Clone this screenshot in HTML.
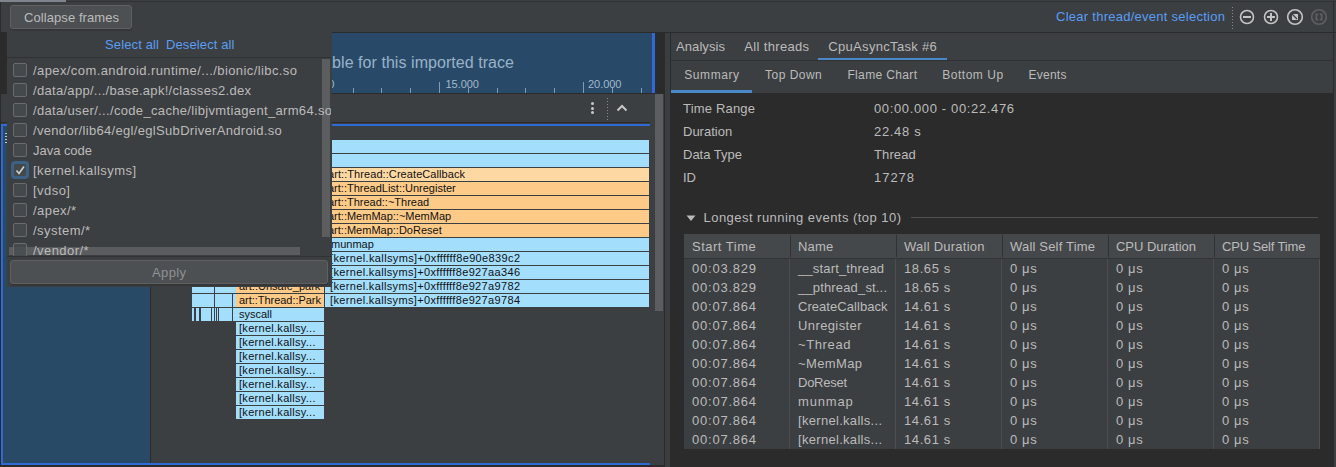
<!DOCTYPE html>
<html><head><meta charset="utf-8">
<style>
html,body{margin:0;padding:0;}
body{width:1336px;height:467px;overflow:hidden;position:relative;background:#3c3f41;font-family:"Liberation Sans",sans-serif;color:#bbbbbb;}
.a{position:absolute;}
.t{position:absolute;white-space:nowrap;line-height:1;}
</style></head><body>
<div class="a" style="left:0px;top:1px;width:1336px;height:1px;background:#313233;"></div>
<div class="a" style="left:0px;top:0px;width:66px;height:2px;background:#7f848d;"></div>
<div class="a" style="left:0px;top:32px;width:1336px;height:1px;background:#2b2b2b;"></div>
<div class="a" style="left:0px;top:2px;width:1px;height:30px;background:#2b2b2b;"></div>
<div class="a" style="left:0px;top:33px;width:7px;height:60px;background:#2b2b2b;"></div>
<div class="a" style="left:7px;top:33px;width:645px;height:60px;background:#284a68;"></div>
<div class="a" style="left:652px;top:33px;width:3px;height:60px;background:#2f69d6;"></div>
<div class="a" style="left:655px;top:33px;width:9px;height:60px;background:#2b2b2b;"></div>
<div class="t" style="right:822px;top:54.5px;font-size:16px;letter-spacing:0.05px;color:#9ab2c9">not available for this imported trace</div>
<div class="a" style="left:36px;top:88px;width:1px;height:5px;background:#7f9cb6;"></div>
<div class="a" style="left:65px;top:88px;width:1px;height:5px;background:#7f9cb6;"></div>
<div class="a" style="left:93px;top:88px;width:1px;height:5px;background:#7f9cb6;"></div>
<div class="a" style="left:122px;top:88px;width:1px;height:5px;background:#7f9cb6;"></div>
<div class="a" style="left:151px;top:82px;width:1px;height:11px;background:#7f9cb6;"></div>
<div class="a" style="left:180px;top:88px;width:1px;height:5px;background:#7f9cb6;"></div>
<div class="a" style="left:209px;top:88px;width:1px;height:5px;background:#7f9cb6;"></div>
<div class="a" style="left:237px;top:88px;width:1px;height:5px;background:#7f9cb6;"></div>
<div class="a" style="left:266px;top:88px;width:1px;height:5px;background:#7f9cb6;"></div>
<div class="a" style="left:295px;top:82px;width:1px;height:11px;background:#7f9cb6;"></div>
<div class="a" style="left:324px;top:88px;width:1px;height:5px;background:#7f9cb6;"></div>
<div class="a" style="left:353px;top:88px;width:1px;height:5px;background:#7f9cb6;"></div>
<div class="a" style="left:381px;top:88px;width:1px;height:5px;background:#7f9cb6;"></div>
<div class="a" style="left:410px;top:88px;width:1px;height:5px;background:#7f9cb6;"></div>
<div class="a" style="left:439px;top:82px;width:1px;height:11px;background:#7f9cb6;"></div>
<div class="a" style="left:468px;top:88px;width:1px;height:5px;background:#7f9cb6;"></div>
<div class="a" style="left:497px;top:88px;width:1px;height:5px;background:#7f9cb6;"></div>
<div class="a" style="left:525px;top:88px;width:1px;height:5px;background:#7f9cb6;"></div>
<div class="a" style="left:554px;top:88px;width:1px;height:5px;background:#7f9cb6;"></div>
<div class="a" style="left:583px;top:82px;width:1px;height:11px;background:#7f9cb6;"></div>
<div class="a" style="left:612px;top:88px;width:1px;height:5px;background:#7f9cb6;"></div>
<div class="a" style="left:641px;top:88px;width:1px;height:5px;background:#7f9cb6;"></div>
<div class="t" style="left:301px;top:78.69px;font-size:11px;color:#a3b9cc;letter-spacing:-0.048px;">10.000</div>
<div class="t" style="left:445.5px;top:78.69px;font-size:11px;color:#a3b9cc;letter-spacing:-0.048px;">15.000</div>
<div class="t" style="left:588px;top:78.69px;font-size:11px;color:#a3b9cc;letter-spacing:-0.048px;">20.000</div>
<div class="a" style="left:0px;top:93px;width:664px;height:1px;background:#2b2b2b;"></div>
<div class="a" style="left:0px;top:94px;width:1px;height:371px;background:#2b2b2b;"></div>
<div class="a" style="left:590.5px;top:102px;width:3px;height:3px;border-radius:50%;background:#c8c8c8"></div>
<div class="a" style="left:590.5px;top:106.5px;width:3px;height:3px;border-radius:50%;background:#c8c8c8"></div>
<div class="a" style="left:590.5px;top:111px;width:3px;height:3px;border-radius:50%;background:#c8c8c8"></div>
<div class="a" style="left:607px;top:98px;width:1px;height:22px;background:repeating-linear-gradient(#8a8a8a 0 1px,transparent 1px 3px);"></div>
<svg class="a" style="left:615px;top:101px" width="14" height="14"><path d="M2.5 9.5 L7 5 L11.5 9.5" stroke="#c8c8c8" stroke-width="2" fill="none"/></svg>
<div class="a" style="left:0px;top:122px;width:650px;height:1px;background:#2b2b2b;"></div>
<div class="a" style="left:655px;top:94px;width:8px;height:217px;background:#5b5d5f;"></div>
<div class="a" style="left:664px;top:33px;width:1px;height:434px;background:#2b2b2b;"></div>
<div class="a" style="left:665px;top:33px;width:5px;height:434px;background:#3b3e40;"></div>
<div class="a" style="left:1px;top:124px;width:649px;height:2px;background:#2f69d6;"></div>
<div class="a" style="left:1px;top:124px;width:2px;height:341px;background:#2f69d6;"></div>
<div class="a" style="left:1px;top:463px;width:649px;height:2px;background:#2f69d6;"></div>
<div class="a" style="left:0px;top:465px;width:664px;height:2px;background:#2b2b2b;"></div>
<div class="a" style="left:3px;top:126px;width:147px;height:337px;background:#284a67;"></div>
<div class="a" style="left:150px;top:126px;width:1px;height:337px;background:#2b2b2b;"></div>
<div class="a" style="left:5px;top:133px;width:2px;height:1px;background:#c0c8d0;"></div>
<div class="a" style="left:5px;top:136px;width:2px;height:1px;background:#c0c8d0;"></div>
<div class="a" style="left:5px;top:139px;width:2px;height:1px;background:#c0c8d0;"></div>
<div class="a" style="left:5px;top:142px;width:2px;height:1px;background:#c0c8d0;"></div>
<div class="a" style="left:192px;top:140px;width:457px;height:13px;background:#a3defd;"></div>
<div class="a" style="left:192px;top:154px;width:457px;height:13px;background:#a3defd;"></div>
<div class="a" style="left:192px;top:168px;width:132px;height:13px;background:#a3defd;"></div>
<div class="a" style="left:192px;top:182px;width:132px;height:13px;background:#a3defd;"></div>
<div class="a" style="left:192px;top:196px;width:132px;height:13px;background:#a3defd;"></div>
<div class="a" style="left:192px;top:210px;width:132px;height:13px;background:#a3defd;"></div>
<div class="a" style="left:192px;top:224px;width:132px;height:13px;background:#a3defd;"></div>
<div class="a" style="left:192px;top:238px;width:132px;height:13px;background:#a3defd;"></div>
<div class="a" style="left:192px;top:252px;width:132px;height:13px;background:#a3defd;"></div>
<div class="a" style="left:192px;top:266px;width:132px;height:13px;background:#a3defd;"></div>
<div class="a" style="left:325px;top:168px;width:324px;height:13px;background:#fed8a3;"></div>
<div class="t" style="left:328px;top:168px;width:321px;overflow:hidden;font-size:11px;line-height:13px;color:#111;letter-spacing:0.073px;">art::Thread::CreateCallback</div>
<div class="a" style="left:325px;top:182px;width:324px;height:13px;background:#fdca87;"></div>
<div class="t" style="left:328px;top:182px;width:321px;overflow:hidden;font-size:11px;line-height:13px;color:#111;">art::ThreadList::Unregister</div>
<div class="a" style="left:325px;top:196px;width:324px;height:13px;background:#fdca87;"></div>
<div class="t" style="left:328px;top:196px;width:321px;overflow:hidden;font-size:11px;line-height:13px;color:#111;">art::Thread::~Thread</div>
<div class="a" style="left:325px;top:210px;width:324px;height:13px;background:#fdca87;"></div>
<div class="t" style="left:328px;top:210px;width:321px;overflow:hidden;font-size:11px;line-height:13px;color:#111;">art::MemMap::~MemMap</div>
<div class="a" style="left:325px;top:224px;width:324px;height:13px;background:#fdca87;"></div>
<div class="t" style="left:328px;top:224px;width:321px;overflow:hidden;font-size:11px;line-height:13px;color:#111;">art::MemMap::DoReset</div>
<div class="a" style="left:325px;top:238px;width:324px;height:13px;background:#a3defd;"></div>
<div class="t" style="left:331px;top:238px;width:318px;overflow:hidden;font-size:11px;line-height:13px;color:#111;">munmap</div>
<div class="a" style="left:325px;top:252px;width:324px;height:13px;background:#a3defd;"></div>
<div class="t" style="left:330px;top:252px;width:319px;overflow:hidden;font-size:11px;line-height:13px;color:#111;letter-spacing:0.365px;">[kernel.kallsyms]+0xffffff8e90e839c2</div>
<div class="a" style="left:325px;top:266px;width:324px;height:13px;background:#a3defd;"></div>
<div class="t" style="left:330px;top:266px;width:319px;overflow:hidden;font-size:11px;line-height:13px;color:#111;letter-spacing:0.347px;">[kernel.kallsyms]+0xffffff8e927aa346</div>
<div class="a" style="left:325px;top:280px;width:324px;height:13px;background:#a3defd;"></div>
<div class="t" style="left:330px;top:280px;width:319px;overflow:hidden;font-size:11px;line-height:13px;color:#111;letter-spacing:0.347px;">[kernel.kallsyms]+0xffffff8e927a9782</div>
<div class="a" style="left:325px;top:294px;width:324px;height:13px;background:#a3defd;"></div>
<div class="t" style="left:330px;top:294px;width:319px;overflow:hidden;font-size:11px;line-height:13px;color:#111;letter-spacing:0.347px;">[kernel.kallsyms]+0xffffff8e927a9784</div>
<div class="a" style="left:192px;top:280px;width:22px;height:13px;background:#a3defd;"></div>
<div class="a" style="left:215px;top:280px;width:21px;height:13px;background:#a3defd;"></div>
<div class="a" style="left:236px;top:280px;width:88px;height:13px;background:#fdca87;"></div>
<div class="t" style="left:239px;top:280px;width:85px;overflow:hidden;font-size:11px;line-height:13px;color:#111;">art::Unsafe_park</div>
<div class="a" style="left:192px;top:294px;width:22px;height:13px;background:#a3defd;"></div>
<div class="a" style="left:215px;top:294px;width:17px;height:13px;background:#a3defd;"></div>
<div class="a" style="left:233px;top:294px;width:3px;height:13px;background:#a3defd;"></div>
<div class="a" style="left:236px;top:294px;width:88px;height:13px;background:#fdca87;"></div>
<div class="t" style="left:239px;top:294px;width:85px;overflow:hidden;font-size:11px;line-height:13px;color:#111;letter-spacing:-0.033px;">art::Thread::Park</div>
<div class="a" style="left:192px;top:308px;width:2px;height:13px;background:#a3defd;"></div>
<div class="a" style="left:196px;top:308px;width:3px;height:13px;background:#a3defd;"></div>
<div class="a" style="left:201px;top:308px;width:10px;height:13px;background:#a3defd;"></div>
<div class="a" style="left:212px;top:308px;width:2px;height:13px;background:#a3defd;"></div>
<div class="a" style="left:215px;top:308px;width:1px;height:13px;background:#a3defd;"></div>
<div class="a" style="left:217px;top:308px;width:1px;height:13px;background:#a3defd;"></div>
<div class="a" style="left:219px;top:308px;width:13px;height:13px;background:#a3defd;"></div>
<div class="a" style="left:233px;top:308px;width:91px;height:13px;background:#a3defd;"></div>
<div class="t" style="left:239px;top:308px;width:85px;overflow:hidden;font-size:11px;line-height:13px;color:#111;">syscall</div>
<div class="a" style="left:236px;top:322px;width:88px;height:13px;background:#a3defd;"></div>
<div class="t" style="left:239px;top:322px;width:85px;overflow:hidden;font-size:11px;line-height:13px;color:#111;letter-spacing:0.286px;">[kernel.kallsy...</div>
<div class="a" style="left:236px;top:336px;width:88px;height:13px;background:#a3defd;"></div>
<div class="t" style="left:239px;top:336px;width:85px;overflow:hidden;font-size:11px;line-height:13px;color:#111;letter-spacing:0.286px;">[kernel.kallsy...</div>
<div class="a" style="left:236px;top:350px;width:88px;height:13px;background:#a3defd;"></div>
<div class="t" style="left:239px;top:350px;width:85px;overflow:hidden;font-size:11px;line-height:13px;color:#111;letter-spacing:0.286px;">[kernel.kallsy...</div>
<div class="a" style="left:236px;top:364px;width:88px;height:13px;background:#a3defd;"></div>
<div class="t" style="left:239px;top:364px;width:85px;overflow:hidden;font-size:11px;line-height:13px;color:#111;letter-spacing:0.286px;">[kernel.kallsy...</div>
<div class="a" style="left:236px;top:378px;width:88px;height:13px;background:#a3defd;"></div>
<div class="t" style="left:239px;top:378px;width:85px;overflow:hidden;font-size:11px;line-height:13px;color:#111;letter-spacing:0.286px;">[kernel.kallsy...</div>
<div class="a" style="left:236px;top:392px;width:88px;height:13px;background:#a3defd;"></div>
<div class="t" style="left:239px;top:392px;width:85px;overflow:hidden;font-size:11px;line-height:13px;color:#111;letter-spacing:0.286px;">[kernel.kallsy...</div>
<div class="a" style="left:236px;top:406px;width:88px;height:13px;background:#a3defd;"></div>
<div class="t" style="left:239px;top:406px;width:85px;overflow:hidden;font-size:11px;line-height:13px;color:#111;letter-spacing:0.286px;">[kernel.kallsy...</div>
<div class="a" style="left:7px;top:2px;width:325px;height:285px;background:#3c3f41;"></div>
<div class="a" style="left:11px;top:27px;width:121px;height:4px;background:#343638;border-radius:0 0 3px 3px"></div>
<div class="a" style="left:10px;top:5px;width:122px;height:24px;background:#4c5052;border:1px solid #5e6060;box-sizing:border-box;border-radius:3px"></div>
<div class="t" style="left:24px;top:11.00px;font-size:13px;color:#bbbbbb;letter-spacing:0.077px;">Collapse frames</div>
<div class="t" style="left:105px;top:37.50px;font-size:13px;color:#589df6;letter-spacing:0.139px;">Select all</div>
<div class="t" style="left:166px;top:37.50px;font-size:13px;color:#589df6;letter-spacing:0.119px;">Deselect all</div>
<div class="a" style="left:7px;top:57px;width:324px;height:1px;background:#2f3133;"></div>
<div class="a" style="left:9px;top:247px;width:291px;height:8px;background:#5a5c5e;"></div>
<div class="a" style="left:322px;top:59px;width:8px;height:178px;background:#5b5d5f;"></div>
<div class="a" style="left:7px;top:58px;width:324px;height:198px;overflow:hidden">
<div class="a" style="left:6px;top:5px;width:14px;height:14px;border-radius:2px;background:rgba(70,76,78,0.8);border:1px solid #6b6b6b;box-sizing:border-box"></div>
<div class="t" style="left:26px;top:6.00px;font-size:13px;letter-spacing:0.409px;color:#bbbbbb">/apex/com.android.runtime/.../bionic/libc.so</div>
<div class="a" style="left:6px;top:25px;width:14px;height:14px;border-radius:2px;background:rgba(70,76,78,0.8);border:1px solid #6b6b6b;box-sizing:border-box"></div>
<div class="t" style="left:26px;top:26.00px;font-size:13px;letter-spacing:0.303px;color:#bbbbbb">/data/app/.../base.apk!/classes2.dex</div>
<div class="a" style="left:6px;top:45px;width:14px;height:14px;border-radius:2px;background:rgba(70,76,78,0.8);border:1px solid #6b6b6b;box-sizing:border-box"></div>
<div class="t" style="left:26px;top:46.00px;font-size:13px;letter-spacing:0.335px;color:#bbbbbb">/data/user/.../code_cache/libjvmtiagent_arm64.so</div>
<div class="a" style="left:6px;top:65px;width:14px;height:14px;border-radius:2px;background:rgba(70,76,78,0.8);border:1px solid #6b6b6b;box-sizing:border-box"></div>
<div class="t" style="left:26px;top:66.00px;font-size:13px;letter-spacing:0.319px;color:#bbbbbb">/vendor/lib64/egl/eglSubDriverAndroid.so</div>
<div class="a" style="left:6px;top:85px;width:14px;height:14px;border-radius:2px;background:rgba(70,76,78,0.8);border:1px solid #6b6b6b;box-sizing:border-box"></div>
<div class="t" style="left:26px;top:86.00px;font-size:13px;letter-spacing:-0.033px;color:#bbbbbb">Java code</div>
<div class="a" style="left:4px;top:103px;width:18px;height:18px;border-radius:4px;background:#3d6185"></div>
<div class="a" style="left:7px;top:106px;width:12px;height:12px;border-radius:2px;background:#43494a"></div>
<svg class="a" style="left:7px;top:106px" width="12" height="12"><path d="M2.5 6.5 L5 9.5 L10 2.5" stroke="#d0d0d0" stroke-width="1.6" fill="none"/></svg>
<div class="t" style="left:26px;top:106.00px;font-size:13px;letter-spacing:0.433px;color:#bbbbbb">[kernel.kallsyms]</div>
<div class="a" style="left:6px;top:125px;width:14px;height:14px;border-radius:2px;background:rgba(70,76,78,0.8);border:1px solid #6b6b6b;box-sizing:border-box"></div>
<div class="t" style="left:26px;top:126.00px;font-size:13px;letter-spacing:0.450px;color:#bbbbbb">[vdso]</div>
<div class="a" style="left:6px;top:145px;width:14px;height:14px;border-radius:2px;background:rgba(70,76,78,0.8);border:1px solid #6b6b6b;box-sizing:border-box"></div>
<div class="t" style="left:26px;top:146.00px;font-size:13px;letter-spacing:0.450px;color:#bbbbbb">/apex/*</div>
<div class="a" style="left:6px;top:165px;width:14px;height:14px;border-radius:2px;background:rgba(70,76,78,0.8);border:1px solid #6b6b6b;box-sizing:border-box"></div>
<div class="t" style="left:26px;top:166.00px;font-size:13px;letter-spacing:0.450px;color:#bbbbbb">/system/*</div>
<div class="a" style="left:6px;top:185px;width:14px;height:14px;border-radius:2px;background:rgba(70,76,78,0.8);border:1px solid #6b6b6b;box-sizing:border-box"></div>
<div class="t" style="left:26px;top:186.00px;font-size:13px;letter-spacing:0.450px;color:#bbbbbb">/vendor/*</div>
</div>
<div class="a" style="left:7px;top:256px;width:324px;height:1px;background:#2f3133;"></div>
<div class="a" style="left:11px;top:282px;width:317px;height:4px;background:#343638;border-radius:0 0 3px 3px"></div>
<div class="a" style="left:10px;top:260px;width:318px;height:24px;background:#4c5052;border:1px solid #5e6060;box-sizing:border-box;border-radius:3px"></div>
<div class="t" style="left:152px;top:266.00px;font-size:13px;color:#909294;letter-spacing:0.371px;">Apply</div>
<div class="a" style="left:670px;top:33px;width:1px;height:434px;background:#2b2b2b;"></div>
<div class="t" style="left:1056px;top:9.60px;font-size:13px;color:#589df6;letter-spacing:0.264px;">Clear thread/event selection</div>
<div class="a" style="left:1232px;top:7px;width:1px;height:22px;background:repeating-linear-gradient(#8a8a8a 0 1px,transparent 1px 3px);"></div>
<svg class="a" style="left:1236px;top:6px" width="100" height="24"><circle cx="11" cy="11" r="6.5" stroke="#c4c4c4" stroke-width="1.6" fill="none"/><rect x="7" y="10" width="8" height="2" fill="#c4c4c4"/><circle cx="35" cy="11" r="6.5" stroke="#c4c4c4" stroke-width="1.6" fill="none"/><rect x="31" y="10" width="8" height="2" fill="#c4c4c4"/><rect x="34" y="7" width="2" height="8" fill="#c4c4c4"/><circle cx="59" cy="11" r="7.3" stroke="#c4c4c4" stroke-width="1.6" fill="none"/><path d="M56 8 H62 V14 H56 Z" fill="#c4c4c4"/><path d="M56 8 L61 13" stroke="#3c3f41" stroke-width="1.3"/><circle cx="83" cy="11" r="7.3" stroke="#5d5f61" stroke-width="1.6" fill="none"/><path d="M82.2 8.3 H80.3 V13.7 H82.2 M83.8 8.3 H85.7 V13.7 H83.8" stroke="#5d5f61" stroke-width="1.7" stroke-linejoin="miter" stroke-linecap="butt" fill="none"/></svg>
<div class="a" style="left:1333px;top:2px;width:1px;height:465px;background:#2b2b2b;"></div>
<div class="t" style="left:676px;top:39.70px;font-size:13px;color:#bbbbbb;letter-spacing:0.085px;">Analysis</div>
<div class="t" style="left:744.3px;top:39.70px;font-size:13px;color:#bbbbbb;letter-spacing:0.338px;">All threads</div>
<div class="t" style="left:828.3px;top:39.70px;font-size:13px;color:#bbbbbb;letter-spacing:0.318px;">CpuAsyncTask #6</div>
<div class="a" style="left:818px;top:58px;width:129px;height:2px;background:#4a88c7;"></div>
<div class="a" style="left:671px;top:60px;width:662px;height:1px;background:#2f3133;"></div>
<div class="t" style="left:684.3px;top:68.84px;font-size:12px;color:#bbbbbb;letter-spacing:0.560px;">Summary</div>
<div class="t" style="left:765.1px;top:68.84px;font-size:12px;color:#bbbbbb;letter-spacing:0.463px;">Top Down</div>
<div class="t" style="left:847.4px;top:68.84px;font-size:12px;color:#bbbbbb;letter-spacing:0.358px;">Flame Chart</div>
<div class="t" style="left:942.2px;top:68.84px;font-size:12px;color:#bbbbbb;letter-spacing:0.526px;">Bottom Up</div>
<div class="t" style="left:1028.5px;top:68.84px;font-size:12px;color:#bbbbbb;letter-spacing:0.243px;">Events</div>
<div class="a" style="left:671px;top:90px;width:81px;height:3px;background:#4a88c7;"></div>
<div class="a" style="left:671px;top:93px;width:662px;height:374px;background:#2b2b2b;"></div>
<div class="t" style="left:683px;top:102.30px;font-size:13px;color:#bbbbbb;letter-spacing:0.186px;">Time Range</div>
<div class="t" style="left:874px;top:102.30px;font-size:13px;color:#bbbbbb;letter-spacing:0.639px;">00:00.000 - 00:22.476</div>
<div class="t" style="left:683px;top:125.30px;font-size:13px;color:#bbbbbb;">Duration</div>
<div class="t" style="left:874px;top:125.30px;font-size:13px;color:#bbbbbb;letter-spacing:0.684px;">22.48 s</div>
<div class="t" style="left:683px;top:148.30px;font-size:13px;color:#bbbbbb;">Data Type</div>
<div class="t" style="left:874px;top:148.30px;font-size:13px;color:#bbbbbb;letter-spacing:0.112px;">Thread</div>
<div class="t" style="left:683px;top:171.30px;font-size:13px;color:#bbbbbb;">ID</div>
<div class="t" style="left:874px;top:171.30px;font-size:13px;color:#bbbbbb;letter-spacing:0.963px;">17278</div>
<svg class="a" style="left:686px;top:214.5px" width="10" height="7"><path d="M0.5 0.5 H9.5 L5 6 Z" fill="#bbbbbb"/></svg>
<div class="t" style="left:703.5px;top:210.50px;font-size:13px;color:#bbbbbb;letter-spacing:0.464px;">Longest running events (top 10)</div>
<div class="a" style="left:911px;top:217px;width:407px;height:1px;background:#4e5254;"></div>
<div class="a" style="left:684px;top:234px;width:636px;height:24px;background:#45484a;"></div>
<div class="a" style="left:684px;top:258px;width:636px;height:1px;background:#323436;"></div>
<div class="a" style="left:684px;top:259px;width:636px;height:190px;background:#3c3f41;"></div>
<div class="a" style="left:1319px;top:259px;width:1px;height:190px;background:#4e5254;"></div>
<div class="t" style="left:692px;top:240.00px;font-size:13px;color:#bbbbbb;letter-spacing:0.501px;">Start Time</div>
<div class="t" style="left:798px;top:240.00px;font-size:13px;color:#bbbbbb;letter-spacing:0.191px;">Name</div>
<div class="t" style="left:904px;top:240.00px;font-size:13px;color:#bbbbbb;letter-spacing:0.247px;">Wall Duration</div>
<div class="t" style="left:1010px;top:240.00px;font-size:13px;color:#bbbbbb;letter-spacing:0.186px;">Wall Self Time</div>
<div class="t" style="left:1116px;top:240.00px;font-size:13px;color:#bbbbbb;letter-spacing:-0.018px;">CPU Duration</div>
<div class="t" style="left:1222px;top:240.00px;font-size:13px;color:#bbbbbb;letter-spacing:-0.145px;">CPU Self Time</div>
<div class="a" style="left:790px;top:235px;width:1px;height:22px;background:#2f3133;"></div>
<div class="a" style="left:789px;top:259px;width:1px;height:190px;background:#4b4e50;"></div>
<div class="a" style="left:896px;top:235px;width:1px;height:22px;background:#2f3133;"></div>
<div class="a" style="left:895px;top:259px;width:1px;height:190px;background:#4b4e50;"></div>
<div class="a" style="left:1002px;top:235px;width:1px;height:22px;background:#2f3133;"></div>
<div class="a" style="left:1001px;top:259px;width:1px;height:190px;background:#4b4e50;"></div>
<div class="a" style="left:1108px;top:235px;width:1px;height:22px;background:#2f3133;"></div>
<div class="a" style="left:1107px;top:259px;width:1px;height:190px;background:#4b4e50;"></div>
<div class="a" style="left:1214px;top:235px;width:1px;height:22px;background:#2f3133;"></div>
<div class="a" style="left:1213px;top:259px;width:1px;height:190px;background:#4b4e50;"></div>
<div class="t" style="left:692px;top:262.00px;font-size:13px;color:#bbbbbb;letter-spacing:0.771px;">00:03.829</div>
<div class="t" style="left:798px;top:262.00px;font-size:13px;color:#bbbbbb;letter-spacing:0.167px;">__start_thread</div>
<div class="t" style="left:904px;top:262.00px;font-size:13px;color:#bbbbbb;letter-spacing:0.601px;">18.65 s</div>
<div class="t" style="left:1010px;top:262.00px;font-size:13px;color:#bbbbbb;letter-spacing:0.639px;">0 μs</div>
<div class="t" style="left:1116px;top:262.00px;font-size:13px;color:#bbbbbb;letter-spacing:0.639px;">0 μs</div>
<div class="t" style="left:1222px;top:262.00px;font-size:13px;color:#bbbbbb;letter-spacing:0.639px;">0 μs</div>
<div class="t" style="left:692px;top:281.00px;font-size:13px;color:#bbbbbb;letter-spacing:0.771px;">00:03.829</div>
<div class="t" style="left:798px;top:281.00px;font-size:13px;color:#bbbbbb;letter-spacing:0.162px;">__pthread_st...</div>
<div class="t" style="left:904px;top:281.00px;font-size:13px;color:#bbbbbb;letter-spacing:0.601px;">18.65 s</div>
<div class="t" style="left:1010px;top:281.00px;font-size:13px;color:#bbbbbb;letter-spacing:0.639px;">0 μs</div>
<div class="t" style="left:1116px;top:281.00px;font-size:13px;color:#bbbbbb;letter-spacing:0.639px;">0 μs</div>
<div class="t" style="left:1222px;top:281.00px;font-size:13px;color:#bbbbbb;letter-spacing:0.639px;">0 μs</div>
<div class="t" style="left:692px;top:300.00px;font-size:13px;color:#bbbbbb;letter-spacing:0.771px;">00:07.864</div>
<div class="t" style="left:798px;top:300.00px;font-size:13px;color:#bbbbbb;letter-spacing:0.048px;">CreateCallback</div>
<div class="t" style="left:904px;top:300.00px;font-size:13px;color:#bbbbbb;letter-spacing:0.601px;">14.61 s</div>
<div class="t" style="left:1010px;top:300.00px;font-size:13px;color:#bbbbbb;letter-spacing:0.639px;">0 μs</div>
<div class="t" style="left:1116px;top:300.00px;font-size:13px;color:#bbbbbb;letter-spacing:0.639px;">0 μs</div>
<div class="t" style="left:1222px;top:300.00px;font-size:13px;color:#bbbbbb;letter-spacing:0.639px;">0 μs</div>
<div class="t" style="left:692px;top:319.00px;font-size:13px;color:#bbbbbb;letter-spacing:0.771px;">00:07.864</div>
<div class="t" style="left:798px;top:319.00px;font-size:13px;color:#bbbbbb;letter-spacing:0.393px;">Unregister</div>
<div class="t" style="left:904px;top:319.00px;font-size:13px;color:#bbbbbb;letter-spacing:0.601px;">14.61 s</div>
<div class="t" style="left:1010px;top:319.00px;font-size:13px;color:#bbbbbb;letter-spacing:0.639px;">0 μs</div>
<div class="t" style="left:1116px;top:319.00px;font-size:13px;color:#bbbbbb;letter-spacing:0.639px;">0 μs</div>
<div class="t" style="left:1222px;top:319.00px;font-size:13px;color:#bbbbbb;letter-spacing:0.639px;">0 μs</div>
<div class="t" style="left:692px;top:338.00px;font-size:13px;color:#bbbbbb;letter-spacing:0.771px;">00:07.864</div>
<div class="t" style="left:798px;top:338.00px;font-size:13px;color:#bbbbbb;letter-spacing:0.620px;">~Thread</div>
<div class="t" style="left:904px;top:338.00px;font-size:13px;color:#bbbbbb;letter-spacing:0.601px;">14.61 s</div>
<div class="t" style="left:1010px;top:338.00px;font-size:13px;color:#bbbbbb;letter-spacing:0.639px;">0 μs</div>
<div class="t" style="left:1116px;top:338.00px;font-size:13px;color:#bbbbbb;letter-spacing:0.639px;">0 μs</div>
<div class="t" style="left:1222px;top:338.00px;font-size:13px;color:#bbbbbb;letter-spacing:0.639px;">0 μs</div>
<div class="t" style="left:692px;top:357.00px;font-size:13px;color:#bbbbbb;letter-spacing:0.771px;">00:07.864</div>
<div class="t" style="left:798px;top:357.00px;font-size:13px;color:#bbbbbb;letter-spacing:0.372px;">~MemMap</div>
<div class="t" style="left:904px;top:357.00px;font-size:13px;color:#bbbbbb;letter-spacing:0.601px;">14.61 s</div>
<div class="t" style="left:1010px;top:357.00px;font-size:13px;color:#bbbbbb;letter-spacing:0.639px;">0 μs</div>
<div class="t" style="left:1116px;top:357.00px;font-size:13px;color:#bbbbbb;letter-spacing:0.639px;">0 μs</div>
<div class="t" style="left:1222px;top:357.00px;font-size:13px;color:#bbbbbb;letter-spacing:0.639px;">0 μs</div>
<div class="t" style="left:692px;top:376.00px;font-size:13px;color:#bbbbbb;letter-spacing:0.771px;">00:07.864</div>
<div class="t" style="left:798px;top:376.00px;font-size:13px;color:#bbbbbb;letter-spacing:-0.263px;">DoReset</div>
<div class="t" style="left:904px;top:376.00px;font-size:13px;color:#bbbbbb;letter-spacing:0.601px;">14.61 s</div>
<div class="t" style="left:1010px;top:376.00px;font-size:13px;color:#bbbbbb;letter-spacing:0.639px;">0 μs</div>
<div class="t" style="left:1116px;top:376.00px;font-size:13px;color:#bbbbbb;letter-spacing:0.639px;">0 μs</div>
<div class="t" style="left:1222px;top:376.00px;font-size:13px;color:#bbbbbb;letter-spacing:0.639px;">0 μs</div>
<div class="t" style="left:692px;top:395.00px;font-size:13px;color:#bbbbbb;letter-spacing:0.771px;">00:07.864</div>
<div class="t" style="left:798px;top:395.00px;font-size:13px;color:#bbbbbb;letter-spacing:0.834px;">munmap</div>
<div class="t" style="left:904px;top:395.00px;font-size:13px;color:#bbbbbb;letter-spacing:0.601px;">14.61 s</div>
<div class="t" style="left:1010px;top:395.00px;font-size:13px;color:#bbbbbb;letter-spacing:0.639px;">0 μs</div>
<div class="t" style="left:1116px;top:395.00px;font-size:13px;color:#bbbbbb;letter-spacing:0.639px;">0 μs</div>
<div class="t" style="left:1222px;top:395.00px;font-size:13px;color:#bbbbbb;letter-spacing:0.639px;">0 μs</div>
<div class="t" style="left:692px;top:414.00px;font-size:13px;color:#bbbbbb;letter-spacing:0.771px;">00:07.864</div>
<div class="t" style="left:798px;top:414.00px;font-size:13px;color:#bbbbbb;letter-spacing:0.302px;">[kernel.kalls...</div>
<div class="t" style="left:904px;top:414.00px;font-size:13px;color:#bbbbbb;letter-spacing:0.601px;">14.61 s</div>
<div class="t" style="left:1010px;top:414.00px;font-size:13px;color:#bbbbbb;letter-spacing:0.639px;">0 μs</div>
<div class="t" style="left:1116px;top:414.00px;font-size:13px;color:#bbbbbb;letter-spacing:0.639px;">0 μs</div>
<div class="t" style="left:1222px;top:414.00px;font-size:13px;color:#bbbbbb;letter-spacing:0.639px;">0 μs</div>
<div class="t" style="left:692px;top:433.00px;font-size:13px;color:#bbbbbb;letter-spacing:0.771px;">00:07.864</div>
<div class="t" style="left:798px;top:433.00px;font-size:13px;color:#bbbbbb;letter-spacing:0.302px;">[kernel.kalls...</div>
<div class="t" style="left:904px;top:433.00px;font-size:13px;color:#bbbbbb;letter-spacing:0.601px;">14.61 s</div>
<div class="t" style="left:1010px;top:433.00px;font-size:13px;color:#bbbbbb;letter-spacing:0.639px;">0 μs</div>
<div class="t" style="left:1116px;top:433.00px;font-size:13px;color:#bbbbbb;letter-spacing:0.639px;">0 μs</div>
<div class="t" style="left:1222px;top:433.00px;font-size:13px;color:#bbbbbb;letter-spacing:0.639px;">0 μs</div>
</body></html>
